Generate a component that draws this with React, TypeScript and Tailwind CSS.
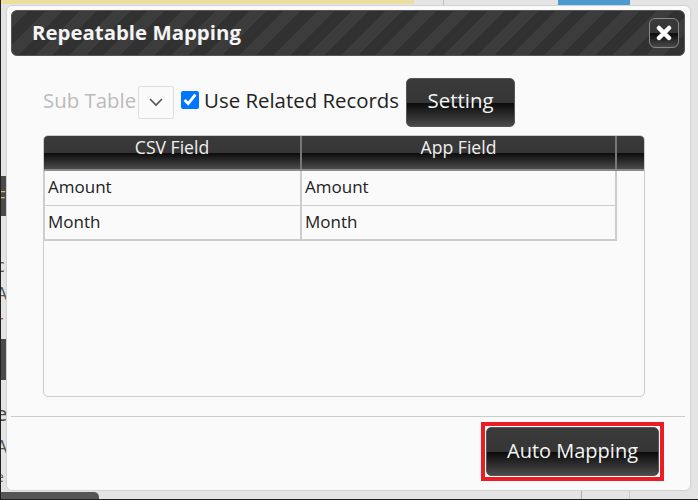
import React from 'react';

const font = { fontFamily: '"Open Sans", "Liberation Sans", sans-serif' };

const gloss = 'bg-[linear-gradient(to_bottom,#3a3a3a_0%,#363636_50%,#0c0c0c_52%,#4a4a4a_100%)]';

const rows = [
    { csv: 'Amount', app: 'Amount' },
    { csv: 'Month', app: 'Month' },
];

const DarkButton: React.FC<{ label: string; className: string }> = ({ label, className }) => (
    <button className={`${gloss} ${className} rounded-[5px] border border-[#555] text-[#f4f4f4]`}>
        {label}
    </button>
);

// bits of the page behind the dialog, cut off by its left edge
const edgeLetters = [
    { text: 'F', className: 'top-[185px] text-[#e0c860] text-[18px]' },
    { text: 'c', className: 'top-[253px] text-[#555] text-[18px]' },
    { text: 'A', className: 'top-[281px] text-[#555] text-[18px]' },
    { text: 'r', className: 'top-[309px] text-[#a05a20] text-[18px]' },
    { text: 'e', className: 'top-[402px] text-[#444] text-[20px]' },
    { text: 'A', className: 'top-[434px] text-[#555] text-[18px]' },
    { text: 'e', className: 'top-[465px] text-[#666] text-[14px]' },
];

const Backdrop: React.FC = () => (
    <>
        <div className="absolute left-0 top-0 h-[4px] w-[414px] bg-[#eadf9f]"></div>
        <div className="absolute left-[443px] top-0 h-[5px] w-[1px] bg-[#bbb]"></div>
        <div className="absolute left-[558px] top-0 h-[5px] w-[72px] bg-[#4d9ad0]"></div>
        <div className="absolute left-[1px] top-[176px] h-[40px] w-[6px] bg-[#4a4a4a]"></div>
        <div className="absolute left-[1px] top-[339px] h-[41px] w-[6px] bg-[#4a4a4a]"></div>
        <div className="absolute bottom-[1px] left-[1px] h-[7px] w-[98px] rounded-tr-[5px] bg-[#555]"></div>
        <div className="absolute bottom-[1px] left-[581px] h-[8px] w-[1px] bg-[#aaa]"></div>
        <div className="absolute bottom-[1px] left-[629px] h-[8px] w-[1px] bg-[#ccc]"></div>
        <div className="absolute bottom-0 left-0 h-[1px] w-full bg-[#222]"></div>
        <div className="absolute left-0 top-0 h-full w-[1px] bg-[#222]"></div>
        <div className="absolute left-[1px] top-0 h-full w-[5px] overflow-hidden">
            {edgeLetters.map((letter) => (
                <span key={letter.className} className={`absolute left-[-5px] leading-[24px] ${letter.className}`}>
                    {letter.text}
                </span>
            ))}
        </div>
    </>
);

export default function App() {
    return (
        <div className="relative h-[500px] w-[698px] overflow-hidden bg-[#e4e4e4]" style={font}>
            <Backdrop />
            <div className="absolute left-[6px] top-[5px] flex h-[486px] w-[685px] flex-col rounded-[6px] border border-[#d2d2d2] bg-[#fafafa] p-[4px] pr-[5px]">
                <div className="flex h-[46px] shrink-0 items-center justify-between rounded-[6px] border border-[#555] bg-[#333] bg-[repeating-linear-gradient(135deg,#3c3c3c_0,#3c3c3c_12px,#313131_12px,#313131_24px)] pl-[20px] pr-[5px]">
                    <span className="mt-[-2px] text-[20.4px] font-bold text-[#f4f4f4]">Repeatable Mapping</span>
                    <button className={`${gloss} flex h-[30px] w-[30px] items-center justify-center rounded-[6px] border border-[#888]`}>
                        <svg width="16" height="16" viewBox="0 0 16 16">
                            <path d="M3 3 L13 13 M13 3 L3 13" stroke="#fff" strokeWidth="4.5" strokeLinecap="round" />
                        </svg>
                    </button>
                </div>

                <div className="mt-[21px] flex h-[50px] shrink-0 items-center pl-[32px]">
                    <span className="mt-[-4px] text-[20.4px] text-[#bbb]">Sub Table</span>
                    <div className="ml-[2px] flex h-[33px] w-[36px] items-center justify-center rounded-[2px] border border-[#ddd]">
                        <svg width="14" height="14" viewBox="0 0 14 14" fill="none">
                            <path d="M1 4 L7 10 L13 4" stroke="#555" strokeWidth="1.6" />
                        </svg>
                    </div>
                    <input type="checkbox" defaultChecked className="ml-[7px] mt-[-4px] h-[18px] w-[18px] accent-[#0075ff]" />
                    <span className="ml-[5px] mt-[-4px] text-[20.4px] text-[#222]">Use Related Records</span>
                    <DarkButton label="Setting" className="ml-[7px] h-[49px] w-[109px] pb-[4px] text-[20.4px]" />
                </div>

                <div className="ml-[32px] mt-[8px] h-[262px] w-[602px] shrink-0 overflow-hidden rounded-[5px] border border-[#ccc]">
                    <div className={`${gloss} flex h-[35px] border-b-2 border-[#8a8a8a] text-[17.6px] text-[#f0f0f0]`}>
                        <div className="h-full w-[258px] border-r-2 border-[#777] text-center leading-[22px]">CSV Field</div>
                        <div className="h-full w-[315px] border-r-2 border-[#777] text-center leading-[22px]">App Field</div>
                    </div>
                    <div className="w-[573px] border-b-2 border-l border-r-2 border-[#ccc]">
                        {rows.map((row, index) => (
                            <div key={row.csv} className={`flex text-[17px] text-[#222] ${index === 0 ? 'h-[35px] border-b border-[#ccc]' : 'h-[33px]'}`}>
                                <div className={`flex h-full w-[257px] items-center border-r-2 border-[#ccc] pl-[3px] ${index === 0 ? 'pb-[2px]' : 'pb-[1px]'}`}>{row.csv}</div>
                                <div className={`flex h-full items-center pl-[3px] ${index === 0 ? 'pb-[2px]' : 'pb-[1px]'}`}>{row.app}</div>
                            </div>
                        ))}
                    </div>
                </div>

                <div className="mt-[19px] h-[1px] w-[674px] shrink-0 bg-[#ccc]"></div>

                <div className="mr-[21px] mt-[5px] flex justify-end">
                    <div className="border-[4px] border-[#ed1c24] bg-white p-[1px]">
                        <DarkButton label="Auto Mapping" className="block h-[49px] w-[173px] pb-[2px] text-[20px]" />
                    </div>
                </div>
            </div>
        </div>
    );
}
